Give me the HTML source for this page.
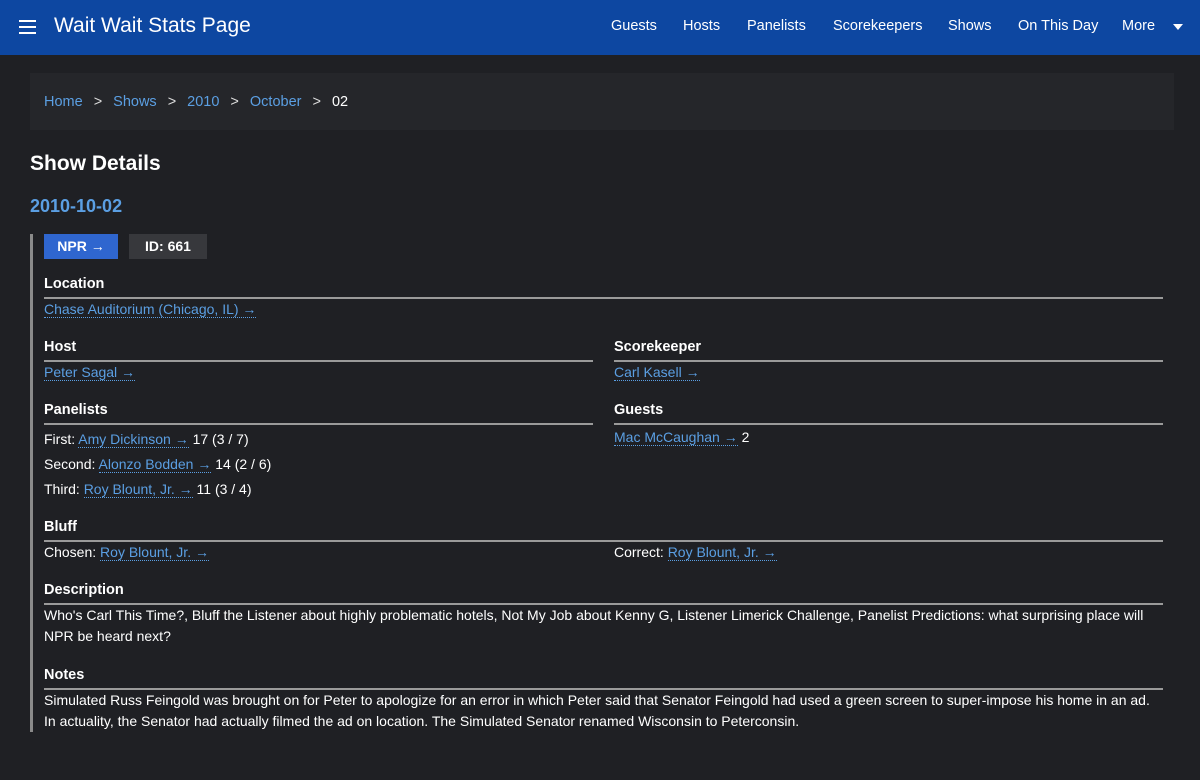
<!DOCTYPE html>
<html><head><meta charset="utf-8"><style>
*{box-sizing:border-box;margin:0;padding:0}
body{width:1200px;height:780px;background:#1f2024;color:#fff;font-family:"Liberation Sans",sans-serif;font-size:14px;overflow:hidden;position:relative}
a{color:#5b9fe3;text-decoration:none}
.nav{height:55px;background:#0d47a1;position:relative}
.ham{position:absolute;left:19px;top:20px;width:17px}
.ham i{display:block;height:2px;background:#fff;margin-bottom:4px}
.title{position:absolute;left:54px;top:14px;font-size:21px;color:#fff}
.menu{position:absolute;top:18px;font-size:14.5px;color:#fff}
.bc{position:absolute;left:30px;top:73px;width:1144px;height:57px;background:#25262a;padding:21px 14px;font-size:14.5px}
.bc span.s{margin:0 11px;color:#ddd}
h1{position:absolute;left:30px;top:152px;font-size:21px;font-weight:bold}
h2{position:absolute;left:30px;top:196px;font-size:18px;font-weight:bold;color:#5b9fe3}
.bar{position:absolute;left:30px;top:234px;width:3px;height:498px;background:#8a8a8a}
.badge{position:absolute;top:234px;height:25px;font-weight:bold;font-size:14px;padding:4px 0;text-align:center}
.h{position:absolute;font-weight:bold;font-size:14.5px;border-bottom:2px solid #9a9a9a;height:23px}
.t{position:absolute;font-size:14px;line-height:21px}
.t a{border-bottom:1px dotted #5b9fe3}
</style></head><body>
<div class="nav"><div class="ham"><i></i><i></i><i></i></div><div class="title">Wait Wait Stats Page</div>
<span class="menu" style="left:611px">Guests</span><span class="menu" style="left:683px">Hosts</span><span class="menu" style="left:747px">Panelists</span><span class="menu" style="left:833px">Scorekeepers</span><span class="menu" style="left:948px">Shows</span><span class="menu" style="left:1018px">On This Day</span><span class="menu" style="left:1122px">More</span>
<span style="position:absolute;left:1173px;top:24px;border-left:5px solid transparent;border-right:5px solid transparent;border-top:6px solid #fff"></span></div>
<div class="bc"><a>Home</a><span class="s">&gt;</span><a>Shows</a><span class="s">&gt;</span><a>2010</a><span class="s">&gt;</span><a>October</a><span class="s">&gt;</span><span>02</span></div>
<h1>Show Details</h1>
<h2>2010-10-02</h2>
<div class="bar"></div>
<div class="badge" style="left:44px;width:74px;background:#2f66cf">NPR →</div>
<div class="badge" style="left:129px;width:78px;background:#37383c">ID: 661</div>
<div class="h" style="left:44px;top:276px;width:1119px">Location</div>
<div class="t" style="left:44px;top:299px"><a>Chase Auditorium (Chicago, IL) →</a></div>
<div class="h" style="left:44px;top:339px;width:549px">Host</div>
<div class="t" style="left:44px;top:362px"><a>Peter Sagal →</a></div>
<div class="h" style="left:614px;top:339px;width:549px">Scorekeeper</div>
<div class="t" style="left:614px;top:362px"><a>Carl Kasell →</a></div>
<div class="h" style="left:44px;top:402px;width:549px">Panelists</div>
<div class="t" style="left:44px;top:427px;line-height:25px">First: <a>Amy Dickinson →</a> 17 (3 / 7)<br>Second: <a>Alonzo Bodden →</a> 14 (2 / 6)<br>Third: <a>Roy Blount, Jr. →</a> 11 (3 / 4)</div>
<div class="h" style="left:614px;top:402px;width:549px">Guests</div>
<div class="t" style="left:614px;top:427px"><a>Mac McCaughan →</a> 2</div>
<div class="h" style="left:44px;top:519px;width:1119px">Bluff</div>
<div class="t" style="left:44px;top:542px">Chosen: <a>Roy Blount, Jr. →</a></div>
<div class="t" style="left:614px;top:542px">Correct: <a>Roy Blount, Jr. →</a></div>
<div class="h" style="left:44px;top:582px;width:1119px">Description</div>
<div class="t" style="left:44px;top:605px;width:1119px">Who's Carl This Time?, Bluff the Listener about highly problematic hotels, Not My Job about Kenny G, Listener Limerick Challenge, Panelist Predictions: what surprising place will NPR be heard next?</div>
<div class="h" style="left:44px;top:667px;width:1119px">Notes</div>
<div class="t" style="left:44px;top:690px;width:1119px">Simulated Russ Feingold was brought on for Peter to apologize for an error in which Peter said that Senator Feingold had used a green screen to super-impose his home in an ad. In actuality, the Senator had actually filmed the ad on location. The Simulated Senator renamed Wisconsin to Peterconsin.</div>
</body></html>
